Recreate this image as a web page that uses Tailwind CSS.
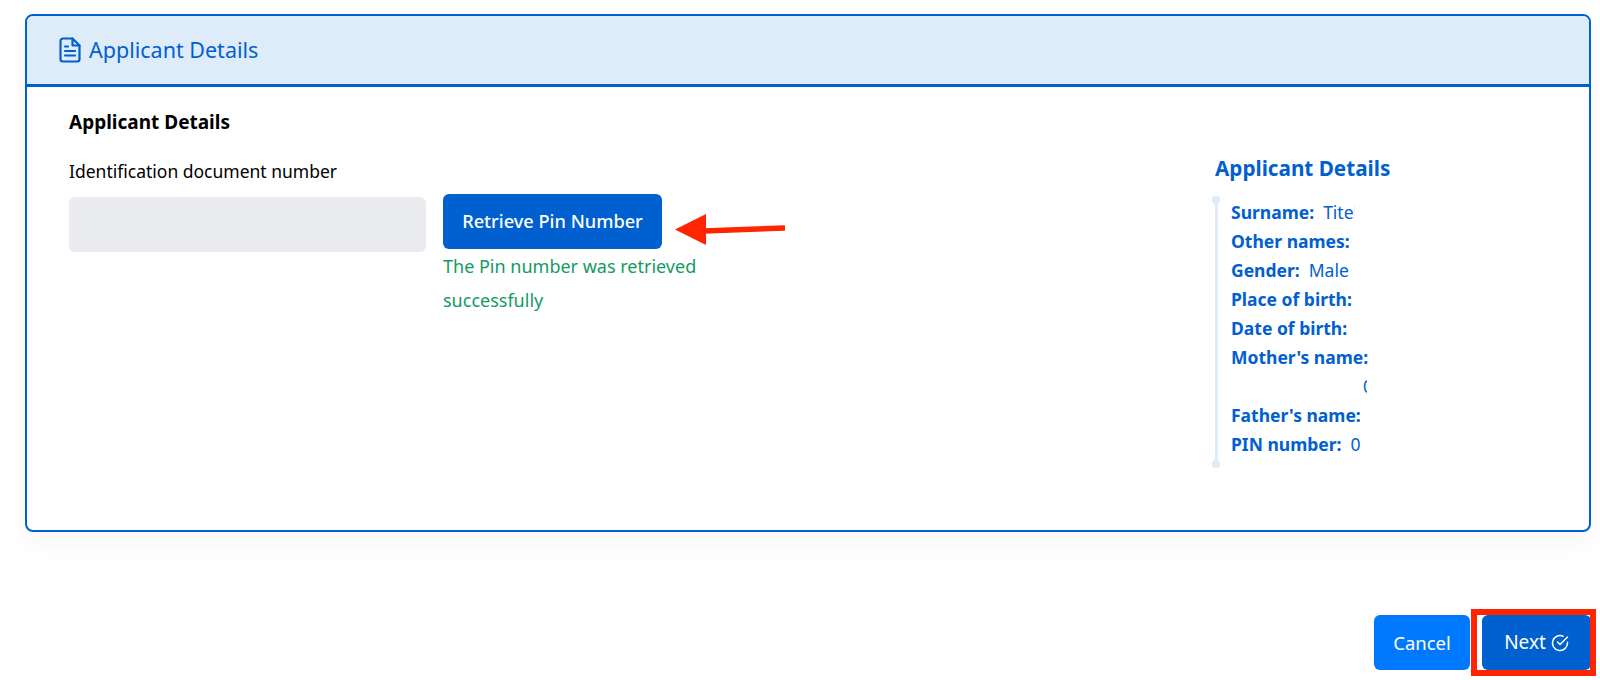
<!DOCTYPE html>
<html lang="en">

<head>
    <meta charset="UTF-8">
    <meta name="viewport" content="width=device-width, initial-scale=1.0">
    <script src="https://cdn.jsdelivr.net/npm/@tailwindcss/browser@4"></script>
    <title>Applicant Details</title>
</head>

<body class="bg-white h-[680px] overflow-hidden font-['Noto_Sans','Liberation_Sans',sans-serif] text-black">
    <div class="relative pt-[14px] pl-[25px] pr-[9px]">
        <!-- card -->
        <div class="h-[518px] border-2 border-[#0160d0] rounded-[8px] shadow-[0_12px_24px_rgba(0,0,0,0.04)] bg-white overflow-hidden">
            <div class="h-[71px] bg-[#deebf8] border-b-[3px] border-[#0160d0] flex items-center pl-[32px]">
                <svg class="w-[22px] h-[26px] text-[#0160d0]" viewBox="0 0 22 26" fill="none" stroke="currentColor" stroke-width="2.2" stroke-linecap="round" stroke-linejoin="round">
                    <path d="M13.5 1.5H4a2.5 2.5 0 0 0-2.5 2.5v18A2.5 2.5 0 0 0 4 24.5h14a2.5 2.5 0 0 0 2.500-2.500V8.500z" />
                    <path d="M13.500 1.500v7h7" />
                    <path d="M6 9.500h3M6 14h10M6 18.500h10" />
                </svg>
                <span class="ml-[8px] text-[21.500px] text-[#0160d0]">Applicant Details</span>
            </div>
            <div class="flex pl-[42px]">
                <!-- form column -->
                <div class="w-[1146px] pt-[19px]">
                    <h2 class="text-[19px] leading-[32px] font-bold">Applicant Details</h2>
                    <p class="mt-[21px] text-[17.500px] leading-[24px]">Identification document number</p>
                    <div class="mt-[11px] flex items-start gap-[17px]">
                        <div class="mt-[3px] w-[357px] h-[55px] bg-[#e9ebef] rounded-[6px]"></div>
                        <div class="w-[280px]">
                            <button class="w-[219px] h-[55px] bg-[#0160d0] rounded-[6px] text-white text-[18.200px] font-medium">Retrieve Pin Number</button>
                            <p class="text-[18px] leading-[34px] text-[#149a63]">The Pin number was retrieved successfully</p>
                        </div>
                    </div>
                </div>
                <!-- summary column -->
                <div class="pt-[66px] text-[#0160d0]">
                    <h3 class="text-[20.700px] leading-[30px] font-bold">Applicant Details</h3>
                    <div class="relative mt-[15px] pl-[16px] pb-[6px] text-[17.500px] leading-[29px]">
                        <div class="absolute left-0 top-[3px] bottom-0 w-[3px] bg-[#deebf8]"></div>
                        <div class="absolute left-[-3px] top-[-2px] w-[8px] h-[8px] rounded-full bg-[#deebf8]"></div>
                        <div class="absolute left-[-3px] bottom-[-3px] w-[8px] h-[8px] rounded-full bg-[#deebf8]"></div>
                        <div class="w-[124px] overflow-hidden whitespace-nowrap"><b>Surname:</b><span class="ml-[9px]">Titel</span></div>
                        <div class="w-[124px] overflow-hidden whitespace-nowrap"><b>Other names:</b></div>
                        <div class="w-[124px] overflow-hidden whitespace-nowrap"><b>Gender:</b><span class="ml-[9px]">Male</span></div>
                        <div class="w-[124px] overflow-hidden whitespace-nowrap"><b>Place of birth:</b></div>
                        <div class="w-[124px] overflow-hidden whitespace-nowrap"><b>Date of birth:</b></div>
                        <div class="w-[137px] overflow-hidden whitespace-nowrap"><b>Mother's name:</b></div>
                        <div class="w-[136px] h-[29px] pl-[132px] overflow-hidden whitespace-nowrap">0</div>
                        <div class="w-[134px] overflow-hidden whitespace-nowrap"><b>Father's name:</b></div>
                        <div class="w-[134px] overflow-hidden whitespace-nowrap"><b>PIN number:</b><span class="ml-[9px]">0</span></div>
                    </div>
                </div>
            </div>
        </div>

        <!-- actions -->
        <div class="mt-[83px] flex justify-end gap-[12px]">
            <button class="w-[96px] h-[55px] bg-[#0179fe] rounded-[6px] text-white text-[18.500px]">Cancel</button>
            <button class="w-[109px] h-[55px] bg-[#0160d0] rounded-[6px] text-white text-[19px] flex items-center justify-center gap-[5px]">
                Next
                <svg class="w-[18px] h-[18px]" viewBox="0 0 18 18" fill="none" stroke="currentColor" stroke-width="1.5" stroke-linecap="round" stroke-linejoin="round">
                    <path d="M16.500 8.200V9a7.500 7.500 0 1 1-4.400-6.800" />
                    <path d="M16.500 3L9 10.500 6.500 8" />
                </svg>
            </button>
        </div>

        <!-- annotations drawn over the screenshot -->
        <svg class="absolute left-[670px] top-[205px]" width="120" height="50" viewBox="0 0 120 50">
            <path d="M36 9L5 24.500 36 40z" fill="#fe2500" />
            <path d="M34 26L115 23" stroke="#fe2500" stroke-width="5.500" fill="none" />
        </svg>
        <div class="absolute left-[1471px] top-[609px] w-[125px] h-[67px] border-[6px] border-[#fe2500]"></div>
    </div>
</body>

</html>
